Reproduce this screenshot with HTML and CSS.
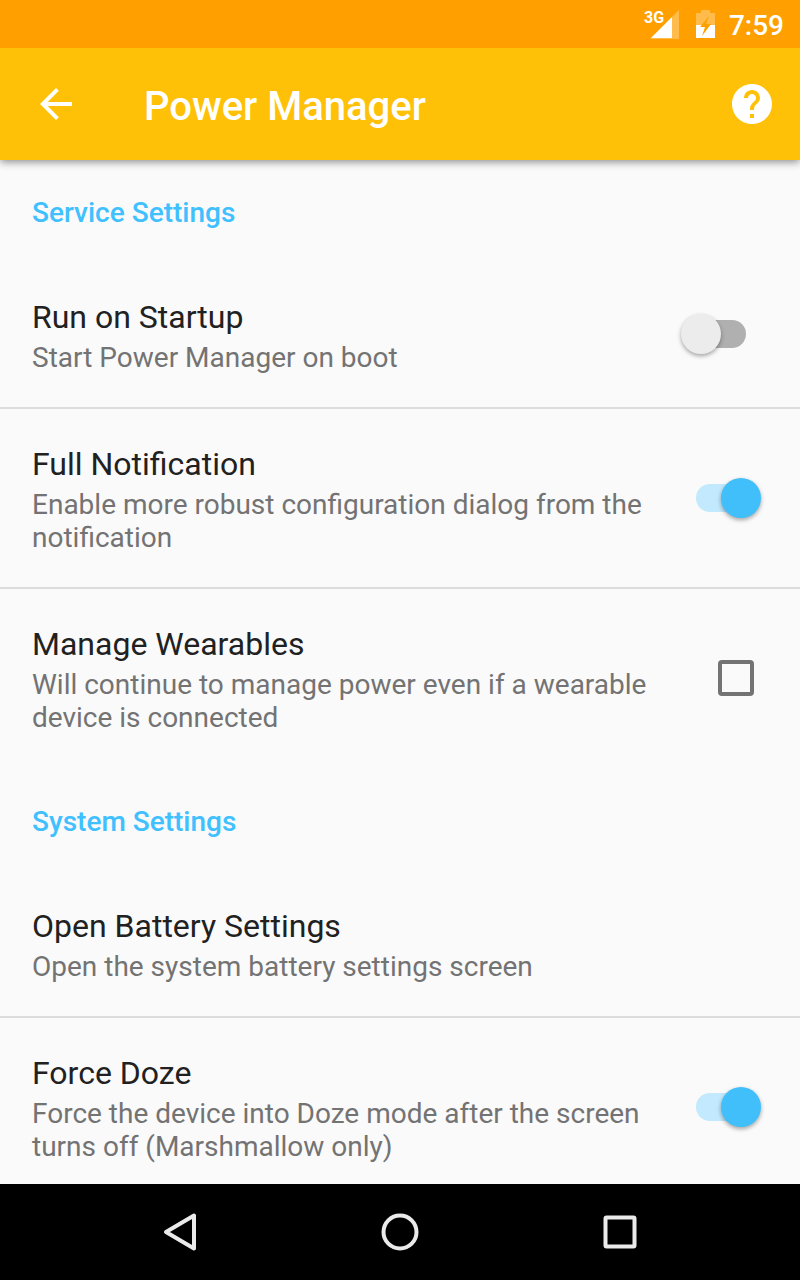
FILE: index.html
```
<!DOCTYPE html>
<html lang="en">
<head>
<meta charset="utf-8">
<meta name="viewport" content="width=device-width, initial-scale=1">
<title>Power Manager</title>
<link rel="stylesheet" href="styles.css">
</head>
<body>
<div class="screen">
  <div class="status-bar">
    <svg class="signal" width="36" height="32" viewBox="0 0 36 32" role="img" aria-label="Cellular signal">
      <path d="M35 2v29H6z" fill="#fff" fill-opacity=".3"/>
      <path d="M28 9v21H7z" fill="#fff"/>
      <text x="0" y="15" class="signal-label">3G</text>
    </svg>
    <svg class="battery" width="20" height="30" viewBox="0 0 20 30" role="img" aria-label="Battery charging">
      <path d="M5 1h9v3h5v12H0V4h5z" fill="#fff" fill-opacity=".3"/>
      <path d="M0 16h19v13H0z" fill="#fff"/>
      <path d="M13 7L4 18h5l-3 9 9-12h-5z" fill="#ffa000"/>
    </svg>
    <span class="clock">7:59</span>
  </div>

  <header class="app-bar">
    <button class="icon-button" type="button" aria-label="Back">
      <svg width="48" height="48" viewBox="0 0 24 24"><path fill="#fff" d="M20 11H7.830l5.590-5.590L12 4l-8 8 8 8 1.410-1.410L7.830 13H20z"/></svg>
    </button>
    <h1 class="title">Power Manager</h1>
    <button class="icon-button" type="button" aria-label="Help">
      <svg width="48" height="48" viewBox="0 0 24 24"><path fill="#fff" d="M12 2C6.480 2 2 6.480 2 12s4.480 10 10 10 10-4.480 10-10S17.520 2 12 2zm1 17h-2v-2h2zm2.070-7.750l-.9.920C13.450 12.900 13 13.500 13 15h-2v-.5c0-1.100.45-2.100 1.170-2.830l1.240-1.260c.37-.36.59-.86.59-1.410 0-1.100-.9-2-2-2s-2 .9-2 2H8c0-2.210 1.790-4 4-4s4 1.790 4 4c0 .88-.36 1.680-.93 2.250z"/></svg>
    </button>
  </header>

  <main class="content">
    <section>
      <h2 class="section-title">Service Settings</h2>
      <label class="row">
        <span class="text"><span class="name">Run on Startup</span><span class="summary">Start Power Manager on boot</span></span>
        <input class="switch" type="checkbox" role="switch">
      </label>
      <label class="row">
        <span class="text"><span class="name">Full Notification</span><span class="summary">Enable more robust configuration dialog from the notification</span></span>
        <input class="switch" type="checkbox" role="switch" checked>
      </label>
      <label class="row">
        <span class="text"><span class="name">Manage Wearables</span><span class="summary">Will continue to manage power even if a wearable device is connected</span></span>
        <input class="checkbox" type="checkbox">
      </label>
    </section>
    <section>
      <h2 class="section-title">System Settings</h2>
      <button class="row" type="button">
        <span class="text"><span class="name">Open Battery Settings</span><span class="summary">Open the system battery settings screen</span></span>
      </button>
      <label class="row">
        <span class="text"><span class="name">Force Doze</span><span class="summary">Force the device into Doze mode after the screen turns off (Marshmallow only)</span></span>
        <input class="switch" type="checkbox" role="switch" checked>
      </label>
    </section>
  </main>

  <nav class="nav-bar" aria-label="System navigation">
    <button class="nav-button" type="button" aria-label="Back">
      <svg width="40" height="40" viewBox="0 0 40 40"><path d="M34 3.500v33L6 20z"/></svg>
    </button>
    <button class="nav-button" type="button" aria-label="Home">
      <svg width="40" height="40" viewBox="0 0 40 40"><circle cx="20" cy="20" r="16.500"/></svg>
    </button>
    <button class="nav-button" type="button" aria-label="Recent apps">
      <svg width="40" height="40" viewBox="0 0 40 40"><rect x="5.500" y="5.500" width="29" height="29" rx="1"/></svg>
    </button>
  </nav>
</div>
</body>
</html>
```
FILE: styles.css
```
* { box-sizing: border-box; }
body { margin: 0; background: #fafafa; font-family: Roboto, "Noto Sans", sans-serif; }
button { margin: 0; padding: 0; border: 0; background: none; font: inherit; text-align: left; }
svg { display: block; }

.screen { display: flex; flex-direction: column; height: 100vh; }

.status-bar { display: flex; flex: none; align-items: center; justify-content: flex-end; height: 48px; padding: 0 16px; background: #ffa000; color: #fff; z-index: 2; }
.signal-label { font-size: 16px; font-weight: 700; fill: #fff; }
.battery { margin-left: 16px; }
.clock { margin-left: 13px; padding-top: 3px; font-size: 28px; font-weight: 500; line-height: 32px; }

.app-bar { display: flex; flex: none; align-items: center; height: 112px; padding: 0 24px 0 32px; background: #ffc107; color: #fff; box-shadow: 0 2px 8px rgba(0, 0, 0, .45); z-index: 1; }
.title { flex: 1; margin: 6px 0 0 64px; font-size: 40px; font-weight: 500; line-height: 48px; }

.content { flex: 1; min-height: 0; overflow: hidden; }
.section-title { margin: 0; padding: 36px 32px 33px; font-size: 28px; font-weight: 500; line-height: 33px; color: #40c0ff; }
section + section { margin-top: 2px; }
.row { display: flex; align-items: center; gap: 24px; width: 100%; padding: 32px 32px 33px; }
.row + .row { border-top: 2px solid #dcdcdc; }
.text { flex: 1; padding-top: 3px; }
.name, .summary { display: block; }
.name { padding-bottom: 4px; font-size: 32px; line-height: 40px; color: #212121; }
.summary { font-size: 28px; line-height: 33px; color: #737373; }

.switch { appearance: none; position: relative; flex: none; width: 80px; height: 48px; margin: 0 8px 0 0; }
.switch::before { content: ""; position: absolute; left: 16px; top: 10px; width: 50px; height: 28px; border-radius: 14px; background: #b0b0b0; }
.switch::after { content: ""; position: absolute; left: 1px; top: 4px; width: 40px; height: 40px; border-radius: 50%; background: #ececec; box-shadow: 0 2px 4px rgba(0, 0, 0, .35); }
.switch:checked::before { background: #c2e9fd; }
.switch:checked::after { left: 41px; background: #40bffb; }
.checkbox { appearance: none; flex: none; width: 36px; height: 36px; margin: 0 14px 0 38px; border: 4px solid #737373; border-radius: 4px; }

.nav-bar { display: flex; flex: none; align-items: center; justify-content: center; gap: 180px; height: 96px; background: #000; }
.nav-button { width: 40px; height: 40px; }
.nav-button svg { fill: none; stroke: #ebebeb; stroke-width: 4; stroke-linejoin: round; }
```
